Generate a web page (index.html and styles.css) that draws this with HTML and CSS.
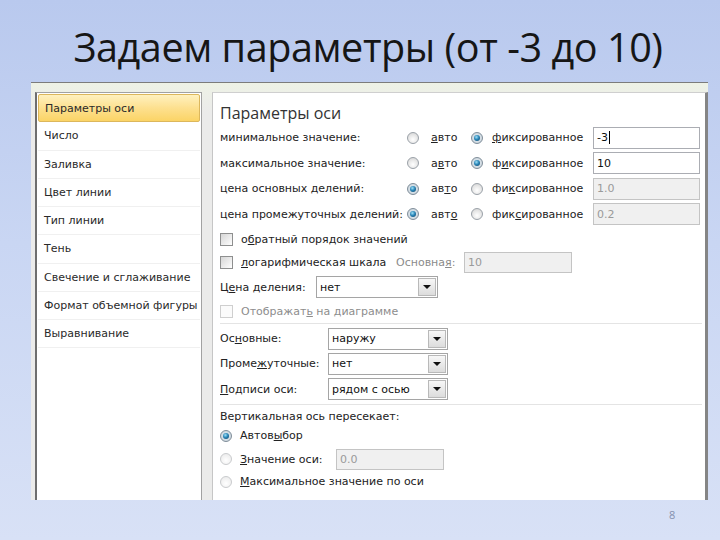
FILE: index.html
```html
<!DOCTYPE html>
<html lang="ru">
<head>
<meta charset="utf-8">
<title>Задаем параметры</title>
<link rel="stylesheet" href="styles.css">
</head>
<body>
<h1 class="title">Задаем параметры (от -3 до 10)</h1>
<div class="dialog">
  <ul class="nav">
    <li class="nav-item active">Параметры оси</li>
    <li class="nav-item">Число</li>
    <li class="nav-item">Заливка</li>
    <li class="nav-item">Цвет линии</li>
    <li class="nav-item">Тип линии</li>
    <li class="nav-item">Тень</li>
    <li class="nav-item">Свечение и сглаживание</li>
    <li class="nav-item">Формат объемной фигуры</li>
    <li class="nav-item">Выравнивание</li>
  </ul>
  <div class="pane">
    <div class="heading">Параметры оси</div>
    <div class="grid">
      <div class="row">
        <span class="lbl">минимальное значение:</span>
        <span class="radio c-ra"></span><span class="rtext"><u>а</u>вто</span>
        <span class="radio on c-rf"></span><span class="ftext"><u>ф</u>иксированное</span>
        <span class="field wide">-3<span class="caret"></span></span>
      </div>
      <div class="row">
        <span class="lbl">максимальное значение:</span>
        <span class="radio c-ra"></span><span class="rtext">а<u>в</u>то</span>
        <span class="radio on c-rf"></span><span class="ftext">ф<u>и</u>ксированное</span>
        <span class="field wide">10</span>
      </div>
      <div class="row">
        <span class="lbl">цена основных делений:</span>
        <span class="radio on c-ra"></span><span class="rtext">ав<u>т</u>о</span>
        <span class="radio c-rf"></span><span class="ftext">фи<u>к</u>сированное</span>
        <span class="field wide disabled">1.0</span>
      </div>
      <div class="row">
        <span class="lbl">цена промежуточных делений:</span>
        <span class="radio on c-ra"></span><span class="rtext">авт<u>о</u></span>
        <span class="radio c-rf"></span><span class="ftext">фик<u>с</u>ированное</span>
        <span class="field wide disabled">0.2</span>
      </div>
    </div>
    <div class="crow first">
      <span class="check"></span><span class="ctext">о<u>б</u>ратный порядок значений</span>
    </div>
    <div class="crow">
      <span class="check"></span><span class="ctext log"><u>л</u>огарифмическая шкала</span>
      <span class="base-lbl">Основна<u>я</u>:</span>
      <span class="field base disabled">10</span>
    </div>
    <div class="srow price">
      <span class="slbl price-lbl">Ц<u>е</u>на деления:</span>
      <span class="select w121"><span class="sval">нет</span><span class="sbtn"><span class="tri"></span></span></span>
    </div>
    <div class="crow show">
      <span class="check disabled"></span><span class="ctext muted">Отображат<u>ь</u> на диаграмме</span>
    </div>
    <div class="sep sep-a"></div>
    <div class="srow">
      <span class="slbl">Ос<u>н</u>овные:</span>
      <span class="select"><span class="sval">наружу</span><span class="sbtn"><span class="tri"></span></span></span>
    </div>
    <div class="srow">
      <span class="slbl">Проме<u>ж</u>уточные:</span>
      <span class="select"><span class="sval">нет</span><span class="sbtn"><span class="tri"></span></span></span>
    </div>
    <div class="srow">
      <span class="slbl"><u>П</u>одписи оси:</span>
      <span class="select"><span class="sval">рядом с осью</span><span class="sbtn"><span class="tri"></span></span></span>
    </div>
    <div class="sep"></div>
    <div class="vlabel">Вертикальная ось пересекает:</div>
    <div class="vrow r1">
      <span class="radio on"></span><span class="vtext">Автов<u>ы</u>бор</span>
    </div>
    <div class="vrow r2">
      <span class="radio disabled"></span><span class="vtext"><u>З</u>начение оси:</span>
      <span class="field axis disabled">0.0</span>
    </div>
    <div class="vrow r3">
      <span class="radio disabled"></span><span class="vtext"><u>М</u>аксимальное значение по оси</span>
    </div>
  </div>
</div>
<div class="pagenum">8</div>
</body>
</html>
```
FILE: styles.css
```css
* { box-sizing: border-box; }
html, body { margin: 0; padding: 0; }
body {
  width: 720px;
  height: 540px;
  overflow: hidden;
  background: linear-gradient(to bottom, #b9c9ee 0%, #c9d6f3 45%, #d8e1f6 100%);
  font-family: "DejaVu Sans", sans-serif;
  position: relative;
}
.title {
  margin: 0;
  height: 82px;
  display: flex;
  align-items: center;
  justify-content: center;
  padding-top: 12px;
  padding-left: 16px;
  font-family: "Open Sans", "Noto Sans", sans-serif;
  font-weight: 400;
  font-size: 39.6px;
  letter-spacing: -0.45px;
  color: #161616;
}
.dialog {
  margin-left: 31px;
  width: 677px;
  height: 418px;
  display: flex;
  gap: 10px;
  padding: 9px 0 0 4px;
  background: linear-gradient(to bottom, #eef2e6, #ebebea 30px);
  border-top: 1px solid #7c7c7c;
}
.nav {
  list-style: none;
  margin: 0;
  padding: 1px;
  width: 167px;
  background: #fff;
  border: 1px solid #a2a2a2;
  border-left: 2px solid #6e6e6e;
  border-bottom: none;
}
.nav-item {
  height: 28.25px;
  display: flex;
  align-items: center;
  padding-left: 6px;
  font-size: 11px;
  color: #2a2a2a;
  border-bottom: 1px solid #f0f0f0;
}
.nav-item.active {
  border: 1px solid #dcb75c;
  border-radius: 2px;
  background: linear-gradient(to bottom, #fff1bf 0%, #fde08f 50%, #fbd466 100%);
}
.pane {
  flex: 1;
  background: #fff;
  border-top: 1px solid #cfcfcf;
  border-left: 1px solid #c6c6c6;
  border-right: 3px solid #858585;
  padding-left: 7px;
  padding-right: 5px;
  font-size: 11px;
  color: #222;
}
u { text-decoration: underline; text-underline-offset: 1px; }
.heading {
  margin-top: 9px;
  height: 22px;
  display: flex;
  align-items: center;
  font-family: "Open Sans", "Noto Sans", sans-serif;
  font-size: 16px;
  color: #333;
}
.grid { margin-top: 1px; }
.row {
  height: 25.5px;
  display: grid;
  grid-template-columns: 187px 13px 11px 40px 13px 8px 101px 107px;
  align-items: center;
}
.lbl { grid-column: 1; white-space: nowrap; }
.c-ra { grid-column: 2; }
.rtext { grid-column: 4; }
.c-rf { grid-column: 5; }
.ftext { grid-column: 7; white-space: nowrap; }
.row .field { grid-column: 8; }
.radio {
  width: 12px;
  height: 12px;
  border-radius: 50%;
  border: 1px solid #9aa1a8;
  background: radial-gradient(circle at 50% 65%, #ffffff 0%, #e9e9e9 50%, #cfcfcf 100%);
  position: relative;
  display: inline-block;
  flex: none;
}
.radio.on::after {
  content: "";
  position: absolute;
  left: 2px;
  top: 2px;
  width: 6px;
  height: 6px;
  border-radius: 50%;
  background: radial-gradient(circle at 40% 35%, #9fe0f6 0%, #2a86b8 45%, #0c3d60 100%);
}
.radio.on { border-color: #7f8d99; background: radial-gradient(circle, #e7f0f6, #c4ced6); }
.radio.disabled { border-color: #c9cbcd; background: radial-gradient(circle at 50% 65%, #fff, #e8e8e8); }
.field {
  height: 22px;
  border: 1px solid #abadb3;
  background: #fff;
  display: flex;
  align-items: center;
  padding-left: 3px;
  font-family: "DejaVu Sans", sans-serif;
  font-size: 11px;
  color: #111;
}
.field.disabled { background: #f0f0f0; color: #9a9a9a; border-color: #c4c4c4; }
.caret { display: inline-block; width: 1px; height: 13px; background: #000; margin-left: 1px; }
.crow {
  height: 23px;
  display: flex;
  align-items: center;
}
.crow.first { margin-top: 1px; }
.check {
  width: 13px;
  height: 13px;
  border: 1px solid #8e8f8f;
  background: linear-gradient(135deg, #d6d6d6 0%, #f2f2f2 70%, #fff 100%);
  flex: none;
  margin-right: 8px;
}
.check.disabled { border-color: #cfcfcf; background: #fbfbfb; }
.ctext { white-space: nowrap; }
.ctext.log { width: 155px; }
.muted { color: #8d8d8d; }
.base-lbl { color: #8b8b8b; width: 68px; white-space: nowrap; }
.field.base { width: 108px; height: 21px; }
.srow {
  height: 25.3px;
  display: flex;
  align-items: center;
}
.srow.price { height: 26px; }
.crow.show { height: 22px; }
.slbl { width: 108px; white-space: nowrap; }
.price-lbl { width: 96px; }
.select {
  width: 120px;
  height: 22px;
  border: 1px solid #a5a5a5;
  display: flex;
  align-items: stretch;
  background: #fff;
}
.select.w121 { width: 122px; }
.sval { flex: 1; display: flex; align-items: center; padding-left: 3px; color: #111; }
.sbtn {
  width: 18px;
  margin: 1px;
  border: 1px solid #b9b9b9;
  background: linear-gradient(to bottom, #f7f7f7, #dcdcdc);
  display: flex;
  align-items: center;
  justify-content: center;
}
.tri {
  width: 0;
  height: 0;
  border-left: 4px solid transparent;
  border-right: 4px solid transparent;
  border-top: 4px solid #111;
}
.sep { height: 1px; background: #e4e4e4; margin: 2px -2px 2px 0; }
.sep.sep-a { margin-top: 1px; }
.vlabel { height: 20px; display: flex; align-items: center; }
.vrow { display: flex; align-items: center; }
.vrow .radio { margin-right: 8px; }
.vrow.r1 { height: 18px; }
.vrow.r2 { height: 29px; }
.vrow.r3 { height: 16px; }
.vtext { white-space: nowrap; }
.r2 .vtext { width: 96px; }
.field.axis { width: 108px; height: 21px; }
.pagenum {
  position: absolute;
  left: 669px;
  top: 507px;
  font-family: "Open Sans", sans-serif;
  font-size: 11px;
  color: #8590ae;
}
```
